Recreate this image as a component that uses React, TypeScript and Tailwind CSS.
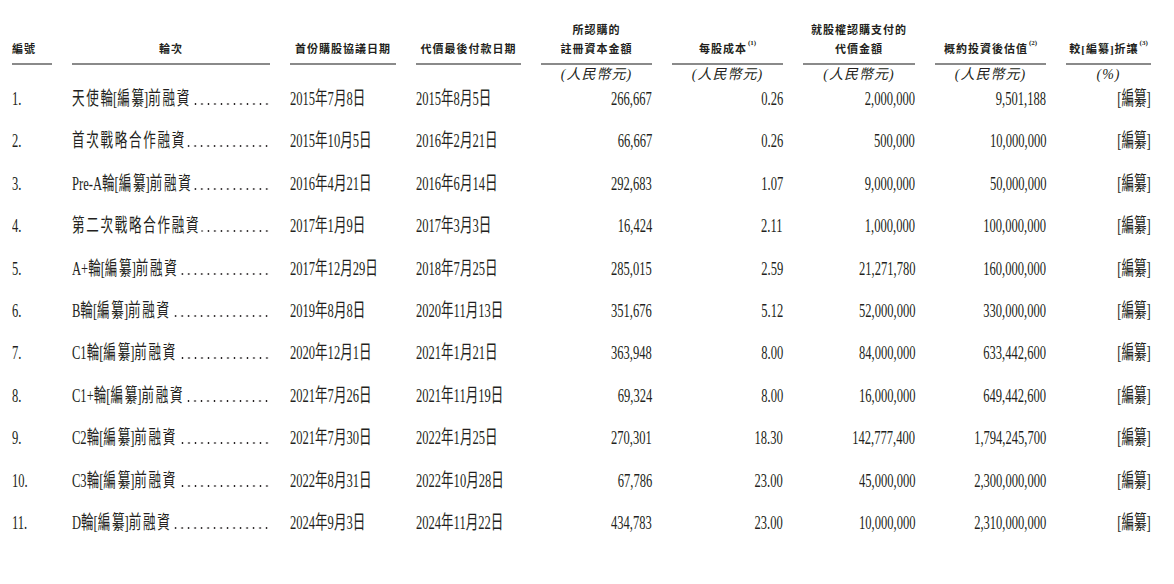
import React from "react";

const GRID =
  "grid grid-cols-[40px_198px_106px_105px_111px_111px_112px_111px_85px] gap-x-[20px] pl-[12px]";

type Row = [string, string, string, string, string, string, string, string];

const rows: Row[] = [
  ["1.", "天使輪[編纂]前融資", "2015年7月8日", "2015年8月5日", "266,667", "0.26", "2,000,000", "9,501,188"],
  ["2.", "首次戰略合作融資", "2015年10月5日", "2016年2月21日", "66,667", "0.26", "500,000", "10,000,000"],
  ["3.", "Pre-A輪[編纂]前融資", "2016年4月21日", "2016年6月14日", "292,683", "1.07", "9,000,000", "50,000,000"],
  ["4.", "第二次戰略合作融資", "2017年1月9日", "2017年3月3日", "16,424", "2.11", "1,000,000", "100,000,000"],
  ["5.", "A+輪[編纂]前融資", "2017年12月29日", "2018年7月25日", "285,015", "2.59", "21,271,780", "160,000,000"],
  ["6.", "B輪[編纂]前融資", "2019年8月8日", "2020年11月13日", "351,676", "5.12", "52,000,000", "330,000,000"],
  ["7.", "C1輪[編纂]前融資", "2020年12月1日", "2021年1月21日", "363,948", "8.00", "84,000,000", "633,442,600"],
  ["8.", "C1+輪[編纂]前融資", "2021年7月26日", "2021年11月19日", "69,324", "8.00", "16,000,000", "649,442,600"],
  ["9.", "C2輪[編纂]前融資", "2021年7月30日", "2022年1月25日", "270,301", "18.30", "142,777,400", "1,794,245,700"],
  ["10.", "C3輪[編纂]前融資", "2022年8月31日", "2022年10月28日", "67,786", "23.00", "45,000,000", "2,300,000,000"],
  ["11.", "D輪[編纂]前融資", "2024年9月3日", "2024年11月22日", "434,783", "23.00", "10,000,000", "2,310,000,000"],
];

function L({ children }: { children: React.ReactNode }) {
  return (
    <div className="text-left">
      <span className="inline-block whitespace-nowrap origin-left scale-x-[0.66]">{children}</span>
    </div>
  );
}

function R({ children }: { children: React.ReactNode }) {
  return (
    <div className="text-right">
      <span className="inline-block whitespace-nowrap origin-right scale-x-[0.66]">{children}</span>
    </div>
  );
}

function Name({ text }: { text: string }) {
  const parts = text.split(/([\u3400-\u9fff]+)/).filter((p) => p.length > 0);
  return (
    <span className="whitespace-nowrap shrink-0">
      {parts.map((p, i) =>
        /[\u3400-\u9fff]/.test(p) ? (
          <span key={i}>
            <span className="tracking-[2.6px]">{p.slice(0, -1)}</span>
            {p.slice(-1)}
          </span>
        ) : (
          <span key={i}>{p}</span>
        )
      )}
    </span>
  );
}

function Head({
  lines,
  align = "center",
  sup,
}: {
  lines: string[];
  align?: "left" | "center";
  sup?: string;
}) {
  return (
    <div
      className={`h-[45px] flex flex-col justify-end pb-[4px] border-b-2 border-[#8a8a8a] ${
        align === "left" ? "items-start" : "items-center"
      }`}
    >
      {lines.map((l, i) => (
        <div key={i} className="leading-[19px] whitespace-nowrap tracking-[1px]">
          {l}
          {sup && i === lines.length - 1 ? (
            <sup className="text-[7px] tracking-normal align-super ml-[1px]">{sup}</sup>
          ) : null}
        </div>
      ))}
    </div>
  );
}

function Unit({ t }: { t: string }) {
  return <div className="text-center italic leading-[20px] text-[14px] tracking-[1px]">{t}</div>;
}

export default function App() {
  return (
    <div
      className="w-[1174px] h-[584px] bg-white overflow-hidden text-[#231f20]"
      style={{ fontFamily: '"Liberation Serif", "Noto Sans CJK TC", serif' }}
    >
      <div className="pt-[20px]">
        {/* header */}
        <div className={`${GRID} text-[11px] font-bold`}>
          <Head lines={["編號"]} align="left" />
          <Head lines={["輪次"]} />
          <Head lines={["首份購股協議日期"]} />
          <Head lines={["代價最後付款日期"]} />
          <Head lines={["所認購的", "註冊資本金額"]} />
          <Head lines={["每股成本"]} sup="(1)" />
          <Head lines={["就股權認購支付的", "代價金額"]} />
          <Head lines={["概約投資後估值"]} sup="(2)" />
          <Head lines={["較[編纂]折讓"]} sup="(3)" />
        </div>
        {/* units */}
        <div className={`${GRID} h-[23px]`}>
          <div />
          <div />
          <div />
          <div />
          <Unit t="(人民幣元)" />
          <Unit t="(人民幣元)" />
          <Unit t="(人民幣元)" />
          <Unit t="(人民幣元)" />
          <Unit t="(%)" />
        </div>
        {/* body */}
        <div className="text-[19px] leading-[22px]">
          {rows.map((r) => (
            <div key={r[0]} className={`${GRID} h-[42.4px]`}>
              <L>{r[0]}</L>
              <div className="overflow-hidden">
                <div className="w-[300px] origin-left scale-x-[0.66] flex">
                  <Name text={r[1]} />
                  <span className="flex-1 min-w-0 ml-[4px] h-[22px] bg-[radial-gradient(1.8px_1.1px_at_center,#231f20_55%,transparent_100%)] bg-[length:9.85px_4px] bg-repeat-x bg-[position:right_14px]" />
                </div>
              </div>
              <L>{r[2]}</L>
              <L>{r[3]}</L>
              <R>{r[4]}</R>
              <R>{r[5]}</R>
              <R>{r[6]}</R>
              <R>{r[7]}</R>
              <R>[編纂]</R>
            </div>
          ))}
        </div>
      </div>
    </div>
  );
}
